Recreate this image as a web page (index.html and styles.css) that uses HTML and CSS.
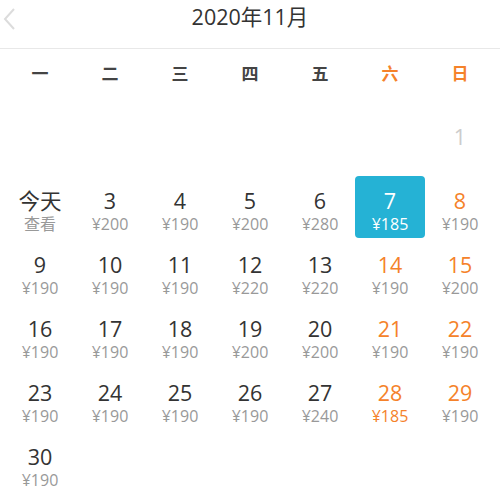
FILE: index.html
```html
<!DOCTYPE html>
<html lang="zh-CN">
<head>
<meta charset="utf-8">
<link rel="stylesheet" href="styles.css">
</head>
<body>
<div class="cal">
  <header class="head">
    <svg class="back" width="14" height="24" viewBox="0 0 14 24"><path d="M12 2 L3 12 L12 22" fill="none" stroke="#dcdcdc" stroke-width="2"/></svg>
    <div class="title">2020年11月</div>
  </header>
  <div class="week">
    <span>一</span><span>二</span><span>三</span><span>四</span><span>五</span><span class="we">六</span><span class="we">日</span>
  </div>
  <div class="grid">
    <div class="cell empty"></div><div class="cell empty"></div><div class="cell empty"></div><div class="cell empty"></div><div class="cell empty"></div><div class="cell empty"></div>
    <div class="cell past"><div class="n">1</div></div>

    <div class="cell"><div class="n">今天</div><div class="p">查看</div></div>
    <div class="cell"><div class="n">3</div><div class="p">¥200</div></div>
    <div class="cell"><div class="n">4</div><div class="p">¥190</div></div>
    <div class="cell"><div class="n">5</div><div class="p">¥200</div></div>
    <div class="cell"><div class="n">6</div><div class="p">¥280</div></div>
    <div class="cell sel"><div class="n">7</div><div class="p">¥185</div></div>
    <div class="cell we"><div class="n">8</div><div class="p">¥190</div></div>

    <div class="cell"><div class="n">9</div><div class="p">¥190</div></div>
    <div class="cell"><div class="n">10</div><div class="p">¥190</div></div>
    <div class="cell"><div class="n">11</div><div class="p">¥190</div></div>
    <div class="cell"><div class="n">12</div><div class="p">¥220</div></div>
    <div class="cell"><div class="n">13</div><div class="p">¥220</div></div>
    <div class="cell we"><div class="n">14</div><div class="p">¥190</div></div>
    <div class="cell we"><div class="n">15</div><div class="p">¥200</div></div>

    <div class="cell"><div class="n">16</div><div class="p">¥190</div></div>
    <div class="cell"><div class="n">17</div><div class="p">¥190</div></div>
    <div class="cell"><div class="n">18</div><div class="p">¥190</div></div>
    <div class="cell"><div class="n">19</div><div class="p">¥200</div></div>
    <div class="cell"><div class="n">20</div><div class="p">¥200</div></div>
    <div class="cell we"><div class="n">21</div><div class="p">¥190</div></div>
    <div class="cell we"><div class="n">22</div><div class="p">¥190</div></div>

    <div class="cell"><div class="n">23</div><div class="p">¥190</div></div>
    <div class="cell"><div class="n">24</div><div class="p">¥190</div></div>
    <div class="cell"><div class="n">25</div><div class="p">¥190</div></div>
    <div class="cell"><div class="n">26</div><div class="p">¥190</div></div>
    <div class="cell"><div class="n">27</div><div class="p">¥240</div></div>
    <div class="cell we low"><div class="n">28</div><div class="p">¥185</div></div>
    <div class="cell we"><div class="n">29</div><div class="p">¥190</div></div>

    <div class="cell"><div class="n">30</div><div class="p">¥190</div></div>
  </div>
</div>
</body>
</html>
```
FILE: styles.css
```css
* { box-sizing: border-box; }
html, body { margin: 0; padding: 0; background: #fff; }
body {
  font-family: "Open Sans", "Noto Sans CJK SC", sans-serif;
  color: #333;
  width: 500px;
  height: 495px;
  overflow: hidden;
}
.head {
  position: relative;
  height: 49px;
  border-bottom: 1px solid #e8e8e8;
  display: flex;
  justify-content: center;
}
.back {
  position: absolute;
  left: 2px;
  top: 7px;
}
.title {
  font-size: 21.5px;
  line-height: 26px;
  padding-top: 4px;
  color: #333;
}
.week {
  display: grid;
  grid-template-columns: repeat(7, 70px);
  padding: 0 5px;
  height: 63px;
  padding-top: 13px;
}
.week span {
  text-align: center;
  font-size: 17px;
  line-height: 22px;
  font-weight: bold;
  color: #444;
  font-family: "Noto Sans CJK SC", sans-serif;
}
.week span.we { color: #f5822a; }
.grid {
  display: grid;
  grid-template-columns: repeat(7, 70px);
  grid-auto-rows: 64px;
  padding: 0 5px;
}
.cell {
  height: 62px;
  text-align: center;
  padding-top: 12px;
  border-radius: 4px;
}
.n {
  font-size: 21.5px;
  line-height: 26px;
  color: #333;
}
.p {
  font-size: 16px;
  line-height: 20px;
  color: #999;
}
.cell.we .n { color: #f5822a; }
.cell.low .p { color: #f5822a; }
.cell.past .n { color: #ccc; }
.cell.sel { background: #25b2d5; }
.cell.sel .n, .cell.sel .p { color: #fff; }
```
